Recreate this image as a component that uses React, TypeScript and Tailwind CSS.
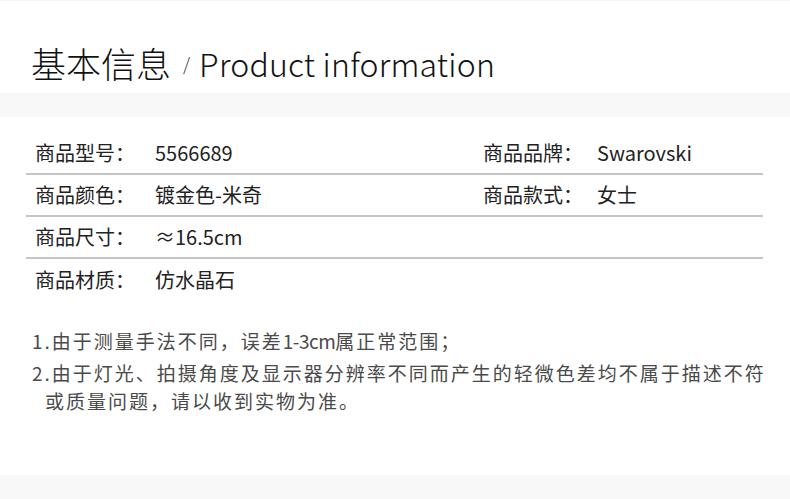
import React from 'react';

const rows: [string, string, string?, string?][] = [
  ['商品型号：', '5566689', '商品品牌：', 'Swarovski'],
  ['商品颜色：', '镀金色-米奇', '商品款式：', '女士'],
  ['商品尺寸：', '≈16.5cm'],
  ['商品材质：', '仿水晶石'],
];

const font = { fontFamily: '"Noto Sans CJK SC", "Noto Sans", sans-serif' };

export default function App() {
  return (
    <div className="w-[790px] h-[499px] bg-white overflow-hidden text-[#222]" style={font}>
      <div className="h-px bg-[#f6f6f6]" />
      <div className="h-[92px] flex items-end pl-[31px] pb-[8px]">
        <span className="text-[35px] font-light leading-[44px] text-[#111]">基本信息</span>
        <span className="text-[18px] font-light leading-[44px] ml-[12px] mr-[9px] text-[#333]">/</span>
        <span className="text-[32px] font-light leading-[44px] tracking-[0.2px] text-[#111]">Product information</span>
      </div>
      <div className="h-[24px] bg-[#f8f8f8]" />

      <div className="pt-[16px] pl-[26px] pr-[27px]">
        {rows.map((r, i) => (
          <div
            key={i}
            className={`flex items-center h-[42px] text-[20px] ${i < rows.length - 1 ? 'border-b-2 border-[#c4c4c4]' : ''}`}
          >
            <div className="flex w-[457px] pl-[9px]">
              <span className="w-[120px]">{r[0]}</span>
              <span>{r[1]}</span>
            </div>
            {r[2] && (
              <div className="flex">
                <span className="w-[114px]">{r[2]}</span>
                <span>{r[3]}</span>
              </div>
            )}
          </div>
        ))}
      </div>

      <div className="pl-[32px] pr-[10px] pt-[26px] text-[19px] text-[#4a4a4a] tracking-[2px]">
        <p className="leading-[28px]">
          1.由于测量手法不同，误差<span className="tracking-[-0.5px]">1-3cm</span>属正常范围；
        </p>
        <p className="leading-[28px] mt-[4px] whitespace-nowrap">
          2.由于灯光、拍摄角度及显示器分辨率不同而产生的轻微色差均不属于描述不符
          <br />
          <span className="pl-[13px]">或质量问题，请以收到实物为准。</span>
        </p>
      </div>
      <div className="h-[26px] bg-[#f8f8f8] mt-[60px]" />
    </div>
  );
}
